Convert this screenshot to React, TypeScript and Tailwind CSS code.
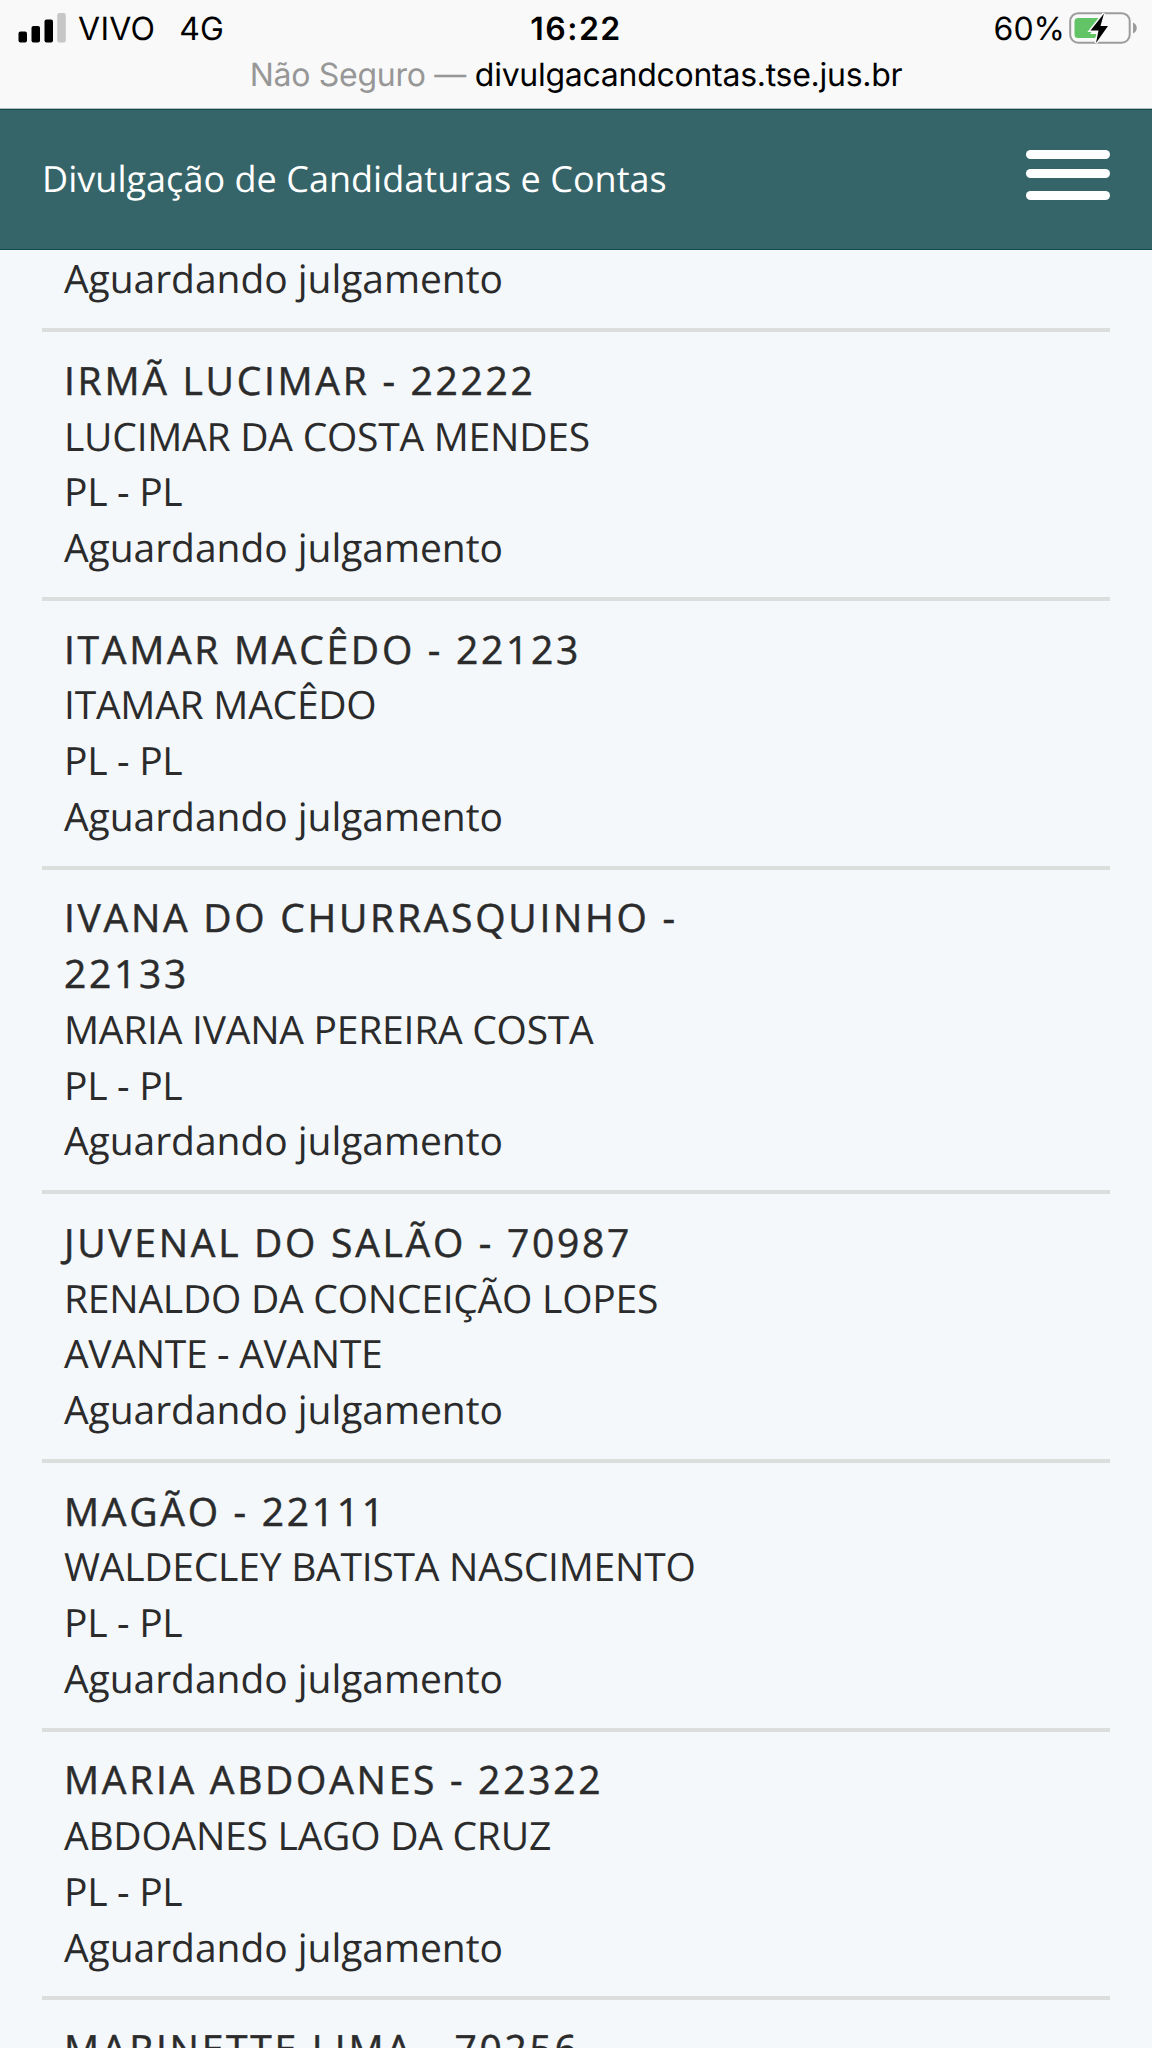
interface Candidate {
  ballotName: string
  fullName: string
  party: string
}

const STATUS = 'Aguardando julgamento'

const candidates: Candidate[] = [
  { ballotName: 'IRMÃ LUCIMAR - 22222', fullName: 'LUCIMAR DA COSTA MENDES', party: 'PL - PL' },
  { ballotName: 'ITAMAR MACÊDO - 22123', fullName: 'ITAMAR MACÊDO', party: 'PL - PL' },
  { ballotName: 'IVANA DO CHURRASQUINHO - 22133', fullName: 'MARIA IVANA PEREIRA COSTA', party: 'PL - PL' },
  { ballotName: 'JUVENAL DO SALÃO - 70987', fullName: 'RENALDO DA CONCEIÇÃO LOPES', party: 'AVANTE - AVANTE' },
  { ballotName: 'MAGÃO - 22111', fullName: 'WALDECLEY BATISTA NASCIMENTO', party: 'PL - PL' },
  { ballotName: 'MARIA ABDOANES - 22322', fullName: 'ABDOANES LAGO DA CRUZ', party: 'PL - PL' },
]

function SignalBars() {
  return (
    <svg width="48" height="32" viewBox="0 0 48 32" className="shrink-0">
      <rect x="0.5" y="18.500" width="8.5" height="11" rx="2" fill="#000" />
      <rect x="13.5" y="13" width="8.5" height="16.5" rx="2" fill="#000" />
      <rect x="26.5" y="6.500" width="8.5" height="23" rx="2" fill="#000" />
      <rect x="39.3" y="0" width="8.5" height="29.5" rx="2" fill="#c7c7c7" />
    </svg>
  )
}

function Battery() {
  return (
    <svg width="69" height="34" viewBox="0 0 69 34" className="shrink-0">
      <rect x="1.2" y="1.2" width="59.5" height="29.5" rx="8" fill="none" stroke="#9c9c9d" strokeWidth="2" />
      <path d="M9 6h25L21 22h8l-3 4H9a3.500 3.500 0 0 1-3.500-3.500V9.500A3.500 3.500 0 0 1 9 6z" fill="#62c466" />
      <path d="M64 10.500c5 2 5 9 0 11z" fill="#9c9c9d" />
      <path d="M35 1.500 21.500 18.500h8l-2.500 12.500L39 14H31.500z" fill="#000" stroke="#f9f9fa" strokeWidth="3" paintOrder="stroke" />
    </svg>
  )
}

export default function App() {
  return (
    <div className="h-[2048px] w-[1152px] overflow-hidden bg-[#f4f8fb] font-['Open_Sans',sans-serif] text-[#2b2b2b] [text-rendering:geometricPrecision]">
      {/* Status bar */}
      <div className="h-[109px] border-b border-[#b5bcbd] bg-[#f9f9f9] font-['Inter',sans-serif] text-black">
        <div className="grid h-[58px] grid-cols-3 items-center pr-[14px] pl-[18px] text-[32px]">
          <div className="flex items-center">
            <SignalBars />
            <span className="ml-3 tracking-[0.3px]">VIVO</span>
            <span className="ml-6">4G</span>
          </div>
          <span className="pr-1 text-center font-semibold tracking-[1.5px]">16:22</span>
          <div className="flex items-center justify-end">
            <span className="mr-1">60%</span>
            <Battery />
          </div>
        </div>
        <p className="text-center text-[32px] leading-[34px] tracking-[-0.27px]">
          <span className="text-[#979797]">Não Seguro — </span>
          divulgacandcontas.tse.jus.br
        </p>
      </div>

      {/* Site header */}
      <header className="flex h-[141px] items-start justify-between border-y border-[#0f4c50] bg-[#356469] px-[42px] text-white">
        <h1 className="pt-[42px] text-[36px] leading-[54px] tracking-[0.03px]">Divulgação de Candidaturas e Contas</h1>
        <button aria-label="Menu" className="flex flex-col pt-10">
          <span className="h-[9px] w-[84px] rounded-full bg-white" />
          <span className="mt-2.5 h-[9px] w-[84px] rounded-full bg-white" />
          <span className="mt-[13px] h-[9px] w-[84px] rounded-full bg-white" />
        </button>
      </header>

      {/* Candidate list */}
      <main className="px-[42px] text-[39px] leading-[55.7px]">
        <p className="h-[78px] px-[22px] pt-px tracking-[-0.05px]">{STATUS}</p>
        {candidates.map((c) => (
          <article key={c.ballotName} className="border-t-4 border-[#dcdddd] px-[22px] pt-[20.8px] pb-[21.2px]">
            <h2 className="w-[640px] tracking-[2.72px] [-webkit-text-stroke:0.5px_#2b2b2b]">{c.ballotName}</h2>
            <p className="tracking-[-0.24px]">{c.fullName}</p>
            <p className="tracking-[-0.3px]">{c.party}</p>
            <p className="tracking-[-0.05px]">{STATUS}</p>
          </article>
        ))}
        <article className="border-t-4 border-[#dcdddd] px-[22px] pt-[20.8px]">
          <h2 className="tracking-[2.72px] [-webkit-text-stroke:0.5px_#2b2b2b]">MARINETTE LIMA - 70256</h2>
        </article>
      </main>
    </div>
  )
}
